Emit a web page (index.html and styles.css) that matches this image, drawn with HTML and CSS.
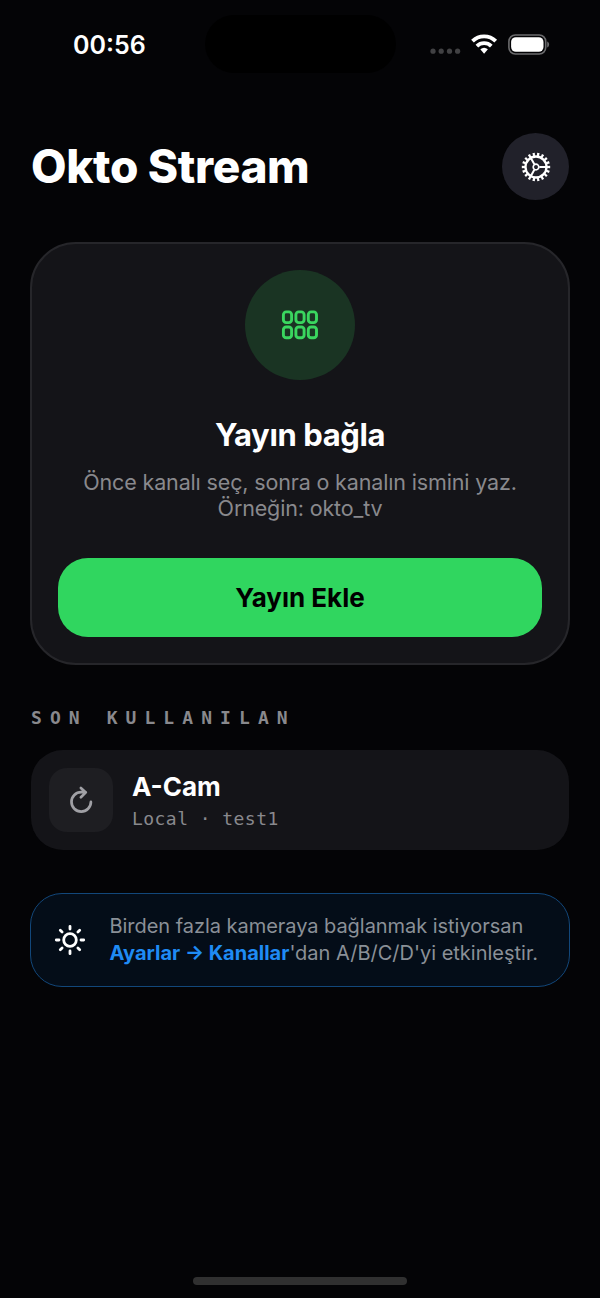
FILE: index.html
```html
<!DOCTYPE html>
<html lang="tr">
<head>
<meta charset="utf-8">
<title>Okto Stream</title>
<link rel="stylesheet" href="styles.css">
</head>
<body>
<div class="screen">
  <div class="status">
    <span class="time">00:56</span>
    <span class="island"></span>
    <svg class="indicators" width="124" height="24" viewBox="0 0 124 24">
      <g fill="#414143"><circle cx="7" cy="19.2" r="2.6"/><circle cx="15.2" cy="19.2" r="2.6"/><circle cx="23.5" cy="19.2" r="2.6"/><circle cx="31.6" cy="19.2" r="2.6"/></g>
      <g fill="none" stroke="#fff" stroke-width="3.8"><path d="M46.5 9.2a16.3 16.3 0 0 1 23.2 0"/><path d="M50.9 14.1a10.3 10.3 0 0 1 14.4 0"/></g>
      <path d="M54.3 17.3a5.8 5.8 0 0 1 7.6 0L58.1 21.7z" fill="#fff"/>
      <rect x="82.9" y="3" width="36.8" height="19" rx="6.4" fill="none" stroke="#6b6b6d" stroke-width="1.6"/>
      <rect x="85.1" y="5.2" width="32.4" height="14.6" rx="4.7" fill="#fff"/>
      <path d="M121.2 9.6c2.6 1.1 2.6 4.8 0 5.9z" fill="#6b6b6d"/>
    </svg>
  </div>

  <header class="header">
    <h1 class="title">Okto Stream</h1>
    <button class="settings" aria-label="Ayarlar">
      <svg width="30" height="30" viewBox="-15 -15 30 30" fill="none" stroke="#fff">
        <circle r="12.6" stroke-width="3.2" stroke-dasharray="2.2 2.198" pathLength="79.16" transform="rotate(-5)"/>
        <circle r="10.5" stroke-width="2.3"/>
        <circle r="2.8" stroke-width="1.7"/>
        <path d="M3.3 0H10M-1.65-2.86L-5-8.66M-1.65 2.86L-5 8.66" stroke-width="2"/>
      </svg>
    </button>
  </header>

  <section class="card">
    <div class="badge">
      <svg width="38" height="32" viewBox="0 0 38 32" fill="none" stroke="#3ad65f" stroke-width="2.9">
        <rect x="2.4" y="2.9" width="8.2" height="10.7" rx="2.8"/><rect x="14.9" y="2.9" width="8.2" height="10.7" rx="2.8"/><rect x="27.3" y="2.9" width="8.2" height="10.7" rx="2.8"/>
        <rect x="2.4" y="18" width="8.2" height="10.7" rx="2.8"/><rect x="14.9" y="18" width="8.2" height="10.7" rx="2.8"/><rect x="27.3" y="18" width="8.2" height="10.7" rx="2.8"/>
      </svg>
    </div>
    <h2 class="card-title">Yayın bağla</h2>
    <p class="card-text">Önce kanalı seç, sonra o kanalın ismini yaz.<br>Örneğin: okto_tv</p>
    <button class="add">Yayın Ekle</button>
  </section>

  <h3 class="section-label">SON KULLANILAN</h3>
  <div class="recent">
    <div class="recent-icon">
      <svg width="26" height="30" viewBox="0 0 26 30" fill="none" stroke="#a0a0a5" stroke-width="2.7" stroke-linecap="round" stroke-linejoin="round">
        <path d="M22.9 16.9A9.7 9.7 0 1 1 13.2 7.2h4.4M12.9 2.9l4.9 4.5-4.9 4.8"/>
      </svg>
    </div>
    <div class="recent-info">
      <div class="recent-name">A-Cam</div>
      <div class="recent-source">Local · test1</div>
    </div>
  </div>

  <div class="hint">
    <svg class="sun" width="32" height="32" viewBox="-16 -16 32 32" fill="none" stroke="#fff" stroke-width="2.8" stroke-linecap="round">
      <circle r="6.3"/>
      <path d="M0-13.7V-11M0 11v2.7M-13.7 0H-11M11 0h2.7M-9.7-9.7l1.8 1.8M7.9 7.9l1.8 1.8M-9.7 9.7l1.8-1.8M7.9-7.9l1.8-1.8"/>
    </svg>
    <p class="hint-text"><span class="hint-line">Birden fazla kameraya bağlanmak istiyorsan</span><br><strong>Ayarlar → Kanallar</strong>'dan A/B/C/D'yi etkinleştir.</p>
  </div>
  <div class="home-bar"></div>
</div>
</body>
</html>
```
FILE: styles.css
```css
* { box-sizing: border-box; margin: 0; padding: 0; }
body { background: #040406; }
button { border: 0; font: inherit; }
.screen {
  width: 600px;
  height: 1298px;
  padding: 0 31px;
  display: flex;
  flex-direction: column;
  background: #040406;
  color: #fff;
  font-family: Inter, "Noto Sans", sans-serif;
  white-space: nowrap;
}
.status {
  height: 133px;
  padding: 15px 19px 0 42px;
  display: grid;
  grid-template-columns: 132px 191px 1fr;
  align-items: start;
}
.time { padding-top: 15px; font-size: 25px; line-height: 30px; font-weight: 600; }
.island { height: 58px; border-radius: 29px; background: #000; }
.indicators { justify-self: end; margin-top: 17px; }
.header { height: 67px; display: flex; align-items: center; justify-content: space-between; }
.title { margin-top: -2px; font-size: 46px; line-height: 56px; font-weight: 800; letter-spacing: -0.35px; }
.settings {
  width: 67px;
  height: 67px;
  border-radius: 50%;
  background: #21212a;
  display: flex;
  align-items: center;
  justify-content: center;
}
.card {
  height: 423px;
  margin: 42px -1px 0;
  padding: 26px 26px 0;
  border: 2px solid #26262a;
  border-radius: 46px;
  background: #141418;
  display: flex;
  flex-direction: column;
  align-items: center;
}
.badge {
  width: 110px;
  height: 110px;
  border-radius: 50%;
  background: #1a3423;
  display: flex;
  align-items: center;
  justify-content: center;
}
.card-title { margin-top: 35px; font-size: 31px; line-height: 40px; font-weight: 700; letter-spacing: -0.4px; }
.card-text { margin-top: 14px; font-size: 21.5px; line-height: 26px; letter-spacing: -0.15px; color: #89898d; text-align: center; }
.add {
  width: 484px;
  height: 79px;
  margin-top: 36.5px;
  border-radius: 30px;
  background: #30d65f;
  color: #000;
  font-size: 26px;
  font-weight: 700;
}
.section-label {
  margin-top: 41px;
  font: bold 18px/24px "DejaVu Sans Mono", monospace;
  letter-spacing: 8.07px;
  color: #89898d;
}
.recent {
  height: 100px;
  margin-top: 20px;
  padding: 0 18px;
  border-radius: 32px;
  background: #141418;
  display: flex;
  align-items: center;
  gap: 19px;
}
.recent-icon {
  width: 64px;
  height: 64px;
  border-radius: 18px;
  background: #1e1e22;
  display: flex;
  align-items: center;
  justify-content: center;
}
.recent-name { font-size: 26px; line-height: 34px; font-weight: 700; }
.recent-source { margin-top: 3px; font: 18px/24px "DejaVu Sans Mono", monospace; letter-spacing: 0.45px; color: #89898d; }
.hint {
  height: 94px;
  margin: 43px -1px 0;
  padding: 0 22px 0 23px;
  border: 1.5px solid #12477a;
  border-radius: 32px;
  background: #040d18;
  display: flex;
  align-items: center;
  gap: 23.5px;
}
.hint-text { font-size: 20px; line-height: 27px; color: #8a9097; }
.hint-line { letter-spacing: -0.04px; }
.hint-text strong { color: #1f8bf4; font-weight: 650; }
.home-bar { width: 214px; height: 8px; margin: auto auto 13px; border-radius: 4px; background: #303030; }
```
